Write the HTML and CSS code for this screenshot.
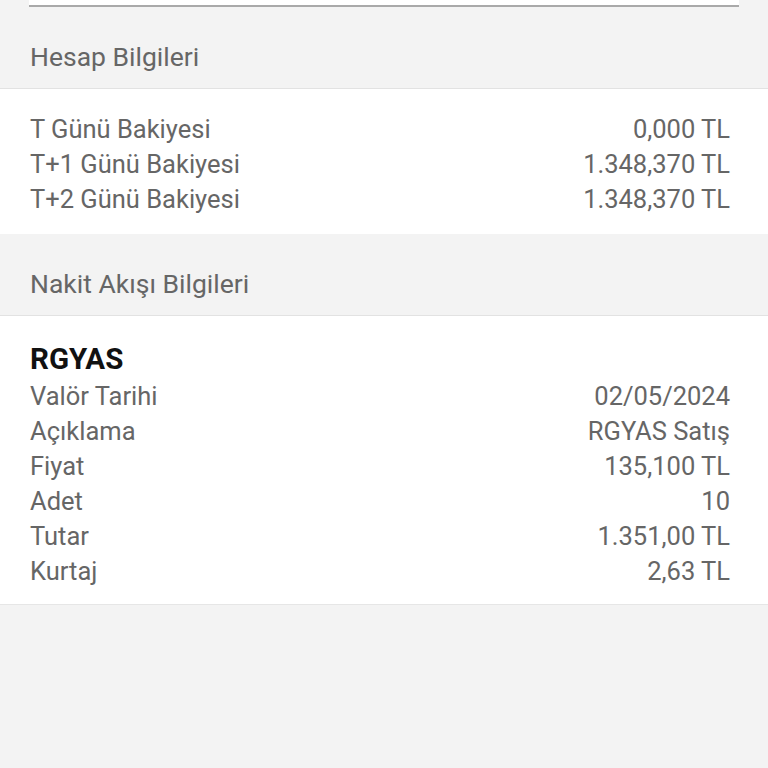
FILE: index.html
```html
<!DOCTYPE html>
<html lang="tr">
<head>
<meta charset="utf-8">
<link rel="stylesheet" href="styles.css">
</head>
<body>
<div class="page">
  <div class="topcard"></div>
  <div class="section-head">Hesap Bilgileri</div>
  <div class="panel panel-balance">
    <div class="row"><span>T Günü Bakiyesi</span><span>0,000 TL</span></div>
    <div class="row"><span>T+1 Günü Bakiyesi</span><span>1.348,370 TL</span></div>
    <div class="row"><span>T+2 Günü Bakiyesi</span><span>1.348,370 TL</span></div>
  </div>
  <div class="section-head">Nakit Akışı Bilgileri</div>
  <div class="panel panel-flow">
    <div class="title">RGYAS</div>
    <div class="row"><span>Valör Tarihi</span><span>02/05/2024</span></div>
    <div class="row"><span>Açıklama</span><span>RGYAS Satış</span></div>
    <div class="row"><span>Fiyat</span><span>135,100 TL</span></div>
    <div class="row"><span>Adet</span><span>10</span></div>
    <div class="row"><span>Tutar</span><span>1.351,00 TL</span></div>
    <div class="row"><span>Kurtaj</span><span>2,63 TL</span></div>
  </div>
</div>
</body>
</html>
```
FILE: styles.css
```css
html, body {
  margin: 0;
  padding: 0;
  background: #f3f3f3;
  font-family: Roboto, "Liberation Sans", sans-serif;
}
.page {
  width: 768px;
  height: 768px;
  overflow: hidden;
  background: #f3f3f3;
}
.topcard {
  margin: 0 29px;
  height: 5px;
  background: #ffffff;
  border-bottom: 2px solid #a9a9a9;
}
.section-head {
  padding: 36px 30px 17px;
  height: 28px;
  line-height: 28px;
  font-size: 26.5px;
  color: #666666;
  border-bottom: 1px solid #e2e2e2;
}
.panel {
  background: #ffffff;
  padding: 0 38px 0 30px;
}
.panel-balance {
  padding-top: 23px;
  padding-bottom: 17px;
}
.panel-flow {
  padding-top: 24px;
  padding-bottom: 15px;
  border-bottom: 1px solid #e6e6e6;
}
.row {
  display: flex;
  justify-content: space-between;
  height: 35px;
  line-height: 35px;
  font-size: 25.5px;
  color: #666666;
}
.title {
  height: 39px;
  line-height: 39px;
  font-size: 29.5px;
  font-weight: 700;
  color: #111111;
}
```
